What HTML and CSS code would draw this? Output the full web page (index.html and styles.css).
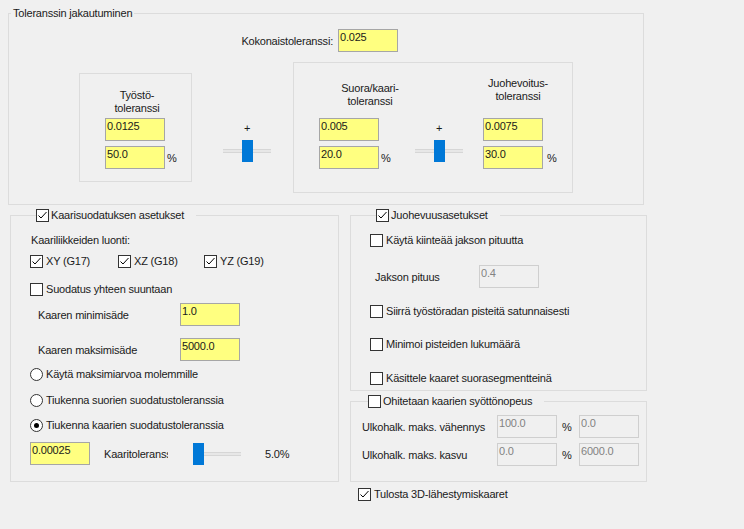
FILE: index.html
```html
<!DOCTYPE html>
<html lang="fi">
<head>
<meta charset="utf-8">
<title>Toleranssit</title>
<link rel="stylesheet" href="styles.css">
</head>
<body>
<div class="dialog">
  <fieldset class="group top-group">
    <legend class="legend legend-text">Toleranssin jakautuminen</legend>
    <div class="kok-row">
      <span class="kok-label">Kokonaistoleranssi:</span>
      <div class="field">0.025</div>
    </div>
    <div class="split-row">
      <div class="tbox tbox-left">
        <div class="ttitle tt-left">Työstö-<br>toleranssi</div>
        <div class="pair pair-left">
          <div class="field">0.0125</div>
          <div class="pct-row"><div class="field">50.0</div><span class="pct">%</span></div>
        </div>
      </div>
      <div class="slider slider-mid">
        <span class="plus">+</span>
        <div class="track"><span class="thumb"></span></div>
      </div>
      <div class="tbox tbox-right">
        <div class="tcol tcol1">
          <div class="ttitle tt-suora">Suora/kaari-<br>toleranssi</div>
          <div class="pair pair-suora">
            <div class="field">0.005</div>
            <div class="pct-row"><div class="field">20.0</div><span class="pct">%</span></div>
          </div>
        </div>
        <div class="slider slider-right">
          <span class="plus">+</span>
          <div class="track"><span class="thumb"></span></div>
        </div>
        <div class="tcol tcol3">
          <div class="ttitle tt-juoh">Juohevoitus-<br>toleranssi</div>
          <div class="pair pair-juoh">
            <div class="field">0.0075</div>
            <div class="pct-row"><div class="field">30.0</div><span class="pct pct-wide">%</span></div>
          </div>
        </div>
      </div>
    </div>
  </fieldset>

  <div class="lower">
    <fieldset class="group arc-group">
      <legend class="legend legend-check">
        <span class="legend-inner"><span class="cb on"><svg viewBox="0 0 11 11" width="11" height="11"><path d="M1.5 5.5 L4 8 L9.5 2" /></svg></span><span>Kaarisuodatuksen asetukset</span></span>
      </legend>
      <div class="luonti">Kaariliikkeiden luonti:</div>
      <div class="axis-row">
        <label class="check"><span class="cb on"><svg viewBox="0 0 11 11" width="11" height="11"><path d="M1.5 5.5 L4 8 L9.5 2" /></svg></span><span>XY (G17)</span></label>
        <label class="check"><span class="cb on"><svg viewBox="0 0 11 11" width="11" height="11"><path d="M1.5 5.5 L4 8 L9.5 2" /></svg></span><span>XZ (G18)</span></label>
        <label class="check"><span class="cb on"><svg viewBox="0 0 11 11" width="11" height="11"><path d="M1.5 5.5 L4 8 L9.5 2" /></svg></span><span>YZ (G19)</span></label>
      </div>
      <label class="check suodatus"><span class="cb"></span><span>Suodatus yhteen suuntaan</span></label>
      <div class="field-row min-row"><span class="row-label arc-label">Kaaren minimisäde</span><div class="field">1.0</div></div>
      <div class="field-row max-row"><span class="row-label arc-label">Kaaren maksimisäde</span><div class="field">5000.0</div></div>
      <label class="check radio r1"><span class="rb"></span><span>Käytä maksimiarvoa molemmille</span></label>
      <label class="check radio r2"><span class="rb"></span><span>Tiukenna suorien suodatustoleranssia</span></label>
      <label class="check radio r3"><span class="rb on"></span><span>Tiukenna kaarien suodatustoleranssia</span></label>
      <div class="field-row kt-row">
        <div class="field">0.00025</div>
        <span class="kt-label">Kaaritoleranssi:</span>
        <div class="slider slider-kt">
          <div class="track track-start"><span class="thumb"></span></div>
        </div>
        <span class="kt-value">5.0%</span>
      </div>
    </fieldset>

    <div class="right-col">
      <fieldset class="group smooth-group">
        <legend class="legend legend-check">
          <span class="legend-inner"><span class="cb on"><svg viewBox="0 0 11 11" width="11" height="11"><path d="M1.5 5.5 L4 8 L9.5 2" /></svg></span><span>Juohevuusasetukset</span></span>
        </legend>
        <label class="check s1"><span class="cb"></span><span>Käytä kiinteää jakson pituutta</span></label>
        <div class="field-row jakso-row"><span class="row-label jakso-label">Jakson pituus</span><div class="field disabled">0.4</div></div>
        <label class="check s2"><span class="cb"></span><span>Siirrä työstöradan pisteitä satunnaisesti</span></label>
        <label class="check s3"><span class="cb"></span><span>Minimoi pisteiden lukumäärä</span></label>
        <label class="check s4"><span class="cb"></span><span>Käsittele kaaret suorasegmentteinä</span></label>
      </fieldset>

      <fieldset class="group feed-group">
        <legend class="legend legend-check">
          <span class="legend-inner"><span class="cb"></span><span>Ohitetaan kaarien syöttönopeus</span></span>
        </legend>
        <div class="field-row feed-row f1"><span class="row-label feed-label">Ulkohalk. maks. vähennys</span><div class="field disabled">100.0</div><span class="feed-pct">%</span><div class="field disabled">0.0</div></div>
        <div class="field-row feed-row f2"><span class="row-label feed-label">Ulkohalk. maks. kasvu</span><div class="field disabled">0.0</div><span class="feed-pct">%</span><div class="field disabled">6000.0</div></div>
      </fieldset>

      <label class="check tulosta"><span class="cb on"><svg viewBox="0 0 11 11" width="11" height="11"><path d="M1.5 5.5 L4 8 L9.5 2" /></svg></span><span>Tulosta 3D-lähestymiskaaret</span></label>
    </div>
  </div>
</div>
</body>
</html>
```

FILE: styles.css
```css
html, body {
  margin: 0;
  padding: 0;
  background: #f0f0f0;
}

body {
  font-family: "Liberation Sans", Arial, sans-serif;
  font-size: 11px;
  letter-spacing: -0.2px;
  color: #1a1a1a;
  width: 744px;
  height: 529px;
  overflow: hidden;
}

.dialog {
  padding: 6px 0 0 8px;
}

/* ---------- group boxes ---------- */
.group {
  margin: 0;
  padding: 0;
  border: 1px solid #dcdcdc;
  min-width: 0;
  box-sizing: border-box;
}

.legend {
  line-height: 14px;
  height: 14px;
  padding: 0;
}

.legend-text {
  margin-left: 2px;
  padding: 0 2px;
}

.legend-check {
  margin-left: 6px;
  padding: 0 12px 0 0;
}

.legend-inner {
  display: flex;
  align-items: center;
  gap: 2px;
  height: 14px;
}

/* ---------- inputs ---------- */
.field {
  width: 60px;
  height: 23px;
  box-sizing: border-box;
  border: 1px solid #a6a6a6;
  background: #ffff80;
  padding: 0 1px;
  line-height: 14px;
  flex: none;
}

.field.disabled {
  background: #f0f0f0;
  border-color: #cfcfcf;
  color: #838383;
}

/* ---------- checkboxes & radios ---------- */
.check {
  display: flex;
  align-items: center;
  gap: 3px;
  height: 13px;
  line-height: 13px;
  white-space: nowrap;
}

.cb {
  width: 13px;
  height: 13px;
  box-sizing: border-box;
  border: 1px solid #333333;
  background: #ffffff;
  display: inline-flex;
  flex: none;
}

.cb svg path {
  fill: none;
  stroke: #000;
  stroke-width: 1;
}

.rb {
  width: 13px;
  height: 13px;
  box-sizing: border-box;
  border: 1px solid #333333;
  border-radius: 50%;
  background: #ffffff;
  display: inline-flex;
  align-items: center;
  justify-content: center;
  flex: none;
}

.rb.on::after {
  content: "";
  width: 5px;
  height: 5px;
  border-radius: 50%;
  background: #000;
}

/* ---------- sliders ---------- */
.slider {
  width: 48px;
  display: flex;
  flex-direction: column;
  align-items: center;
  flex: none;
}

.plus {
  height: 13px;
  line-height: 13px;
}

.track {
  width: 48px;
  height: 22px;
  margin-top: 5px;
  display: flex;
  justify-content: center;
  background: linear-gradient(to bottom,
    transparent 0, transparent 9px,
    #d6d6d6 9px, #d6d6d6 10px,
    #e7e7e7 10px, #e7e7e7 12px,
    #d6d6d6 12px, #d6d6d6 13px,
    transparent 13px);
}

.track-start {
  justify-content: flex-start;
  margin-top: 0;
}

.thumb {
  width: 11px;
  height: 22px;
  background: #0078d7;
}

/* ---------- top group ---------- */
.top-group {
  width: 636px;
  padding: 9px 0 11px 0;
}

.kok-row {
  display: flex;
  align-items: center;
  gap: 5px;
  margin-left: 124px;
}

.kok-label {
  width: 200px;
  text-align: right;
}

.split-row {
  display: flex;
  align-items: flex-start;
  margin-top: 10px;
  padding-left: 70px;
}

.tbox {
  border: 1px solid #dcdcdc;
  box-sizing: border-box;
  flex: none;
}

.ttitle {
  line-height: 13px;
  text-align: center;
  white-space: nowrap;
}

.tbox-left {
  width: 113px;
  margin-top: 11px;
  padding: 15px 0 12px 0;
}

.tt-left {
  padding-left: 3px;
}

.pair {
  display: flex;
  flex-direction: column;
  gap: 5px;
}

.pair-left {
  margin: 3px 0 0 25px;
}

.pct-row {
  display: flex;
  align-items: center;
  gap: 2px;
}

.pct-wide {
  margin-left: 2px;
}

.slider-mid {
  margin: 60px 0 0 31px;
}

.tbox-right {
  width: 280px;
  margin-left: 22px;
  display: flex;
  align-items: flex-start;
  padding: 0 0 23px 25px;
}

.tcol {
  flex: none;
}

.tcol1 {
  width: 91px;
}

.tt-suora {
  width: 60px;
  margin: 19px 0 0 21px;
}

.pair-suora {
  margin-top: 10px;
}

.slider-right {
  margin: 59px 0 0 5px;
}

.tcol3 {
  margin-left: 20px;
}

.tt-juoh {
  width: 60px;
  margin: 14px 0 0 5px;
}

.pair-juoh {
  margin-top: 15px;
}

/* ---------- lower area ---------- */
.lower {
  display: flex;
  align-items: flex-start;
  margin-top: 3px;
}

.arc-group {
  width: 329px;
  margin-left: 2px;
  padding: 0 0 16px 19px;
}

.luonti {
  line-height: 14px;
  margin: 11px 0 0 1px;
}

.axis-row {
  display: grid;
  grid-template-columns: 88px 86px auto;
  margin-top: 8px;
}

.suodatus {
  margin-top: 15px;
}

.field-row {
  display: flex;
  align-items: center;
}

.row-label {
  flex: none;
  white-space: nowrap;
}

.arc-label {
  width: 142px;
  margin-left: 8px;
}

.min-row {
  margin-top: 7px;
}

.max-row {
  margin-top: 12px;
}

.r1 { margin-top: 7px; }
.r2 { margin-top: 13px; }
.r3 { margin-top: 12px; }

.kt-row {
  margin-top: 10px;
}

.kt-label {
  width: 64px;
  margin-left: 14px;
  overflow: hidden;
  white-space: nowrap;
  flex: none;
}

.slider-kt {
  margin-left: 25px;
}

.kt-value {
  margin-left: 24px;
}

.right-col {
  width: 297px;
  margin-left: 11px;
  display: flex;
  flex-direction: column;
}

.smooth-group {
  padding: 0 0 5px 19px;
}

.s1 { margin-top: 12px; }

.jakso-row {
  margin-top: 18px;
}

.jakso-label {
  width: 104px;
  margin-left: 5px;
}

.s2 { margin-top: 17px; }
.s3 { margin-top: 20px; }
.s4 { margin-top: 21px; }

.feed-group {
  margin-top: 3px;
  padding: 0 0 15px 11px;
}

.feed-row.f1 { margin-top: 7px; }
.feed-row.f2 { margin-top: 5px; }

.feed-label {
  width: 135px;
}

.feed-pct {
  width: 17px;
  margin-left: 5px;
  flex: none;
}

.tulosta {
  margin: 6px 0 0 8px;
}
```
